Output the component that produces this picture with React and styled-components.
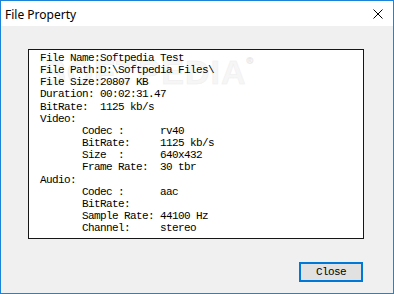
import React from "react";
import styled, { createGlobalStyle } from "styled-components";

const Global = createGlobalStyle`
  html, body { margin: 0; padding: 0; background: #ffffff; }
  * { box-sizing: border-box; }
`;

const Window = styled.div`
  width: 394px;
  height: 294px;
  border: 1px solid #1c84d8;
  display: flex;
  flex-direction: column;
  background: #f0f0f0;
  overflow: hidden;
`;

const TitleBar = styled.div`
  height: 25px;
  background: #ffffff;
  display: flex;
  align-items: center;
  justify-content: space-between;
  padding: 0 10px 0 4px;
  flex: none;
`;

const Title = styled.span`
  font-family: "Noto Sans", "Open Sans", sans-serif;
  font-size: 12px;
  color: #000;
  margin-top: 1px;
`;

const CloseGlyph = styled.svg`
  width: 10px;
  height: 10px;
  display: block;
  margin-top: 1px;
`;

const Body = styled.div`
  flex: 1;
  display: flex;
  flex-direction: column;
  padding: 23px 29px 0 27px;
`;

const InfoBox = styled.div`
  position: relative;
  width: 336px;
  height: 190px;
  background: #ffffff;
  border: 1px solid #161616;
  padding: 2px 0 0 11px;
  overflow: hidden;
`;

const Watermark = styled.div`
  position: absolute;
  left: 14px;
  top: 3px;
  font-family: "Liberation Sans", Arial, sans-serif;
  font-weight: 700;
  font-size: 34px;
  letter-spacing: 1px;
  color: #f6f6f6;
  -webkit-text-stroke: 0.5px #eeeeee;
  pointer-events: none;
  user-select: none;
  sup {
    font-size: 9px;
    vertical-align: top;
    position: relative;
    top: 3px;
    -webkit-text-stroke: 0.4px #e8e8e8;
  }
`;

const Lines = styled.pre`
  position: relative;
  margin: 0;
  font-family: "Liberation Mono", "DejaVu Sans Mono", monospace;
  font-size: 11px;
  letter-spacing: -0.6px;
  line-height: 12.15px;
  color: #000;
  white-space: pre;
`;

const ButtonRow = styled.div`
  display: flex;
  justify-content: flex-end;
  margin-top: 23px;
  padding-right: 1px;
`;

const Button = styled.button`
  width: 64px;
  height: 20px;
  border: 2px solid #0078d7;
  background: #e1e1e1;
  font-family: "Liberation Mono", "DejaVu Sans Mono", monospace;
  font-size: 11px;
  letter-spacing: -0.6px;
  color: #000;
  padding: 0;
  display: flex;
  align-items: center;
  justify-content: center;
`;

const info = [
  "File Name:Softpedia Test",
  "File Path:D:\\Softpedia Files\\",
  "File Size:20807 KB",
  "Duration: 00:02:31.47",
  "BitRate:  1125 kb/s",
  "Video:",
  "       Codec :      rv40",
  "       BitRate:     1125 kb/s",
  "       Size  :      640x432",
  "       Frame Rate:  30 tbr",
  "Audio:",
  "       Codec :      aac",
  "       BitRate:",
  "       Sample Rate: 44100 Hz",
  "       Channel:     stereo",
];

export default function App() {
  return (
    <>
      <Global />
      <Window>
        <TitleBar>
          <Title>File Property</Title>
          <CloseGlyph viewBox="0 0 10 10">
            <path d="M0.5 0.5 L9.5 9.5 M9.5 0.5 L0.5 9.5" stroke="#000" strokeWidth="1" fill="none" />
          </CloseGlyph>
        </TitleBar>
        <Body>
          <InfoBox>
            <Watermark>
              SOFTPEDIA<sup>®</sup>
            </Watermark>
            <Lines>{info.join("\n")}</Lines>
          </InfoBox>
          <ButtonRow>
            <Button>Close</Button>
          </ButtonRow>
        </Body>
      </Window>
    </>
  );
}
